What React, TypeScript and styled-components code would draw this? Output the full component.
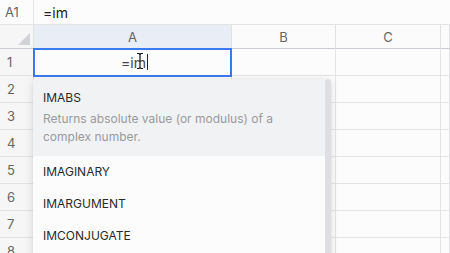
import React from 'react';
import styled, { createGlobalStyle } from 'styled-components';

const GlobalStyle = createGlobalStyle`
  html, body {
    margin: 0;
    padding: 0;
    background: #fbfbfb;
  }
  body {
    font-family: Inter, "Noto Sans", sans-serif;
  }
`;

const Sheet = styled.div`
  position: relative;
  width: 450px;
  height: 253px;
  overflow: hidden;
  background: #fbfbfb;
`;

const FormulaBar = styled.div`
  display: flex;
  height: 25px;
  box-sizing: border-box;
  border-bottom: 1px solid #e4e4e6;
  background: #fcfcfc;
`;

const NameBox = styled.div`
  width: 34px;
  box-sizing: border-box;
  border-right: 1px solid #e4e4e6;
  display: flex;
  align-items: center;
  padding-left: 5px;
  font-size: 13px;
  color: #666;
`;

const FormulaInput = styled.div`
  flex: 1;
  display: flex;
  align-items: center;
  padding-left: 9px;
  font-size: 14px;
  color: #222;
`;

const Grid = styled.div`
  display: grid;
  grid-template-columns: 34px 198px 104px 105px 1fr;
  grid-template-rows: 24px repeat(8, 27px);
`;

const Corner = styled.div`
  position: relative;
  box-sizing: border-box;
  background: #f6f6f7;
  border-right: 1px solid #e2e2e4;
  border-bottom: 1px solid #c9ccd6;
  &::after {
    content: '';
    position: absolute;
    right: 3px;
    bottom: 3px;
    border-style: solid;
    border-width: 0 0 12px 12px;
    border-color: transparent transparent #d2d3d6 transparent;
  }
`;

const ColHeader = styled.div<{ $active?: boolean }>`
  box-sizing: border-box;
  display: flex;
  align-items: center;
  justify-content: center;
  font-size: 13px;
  color: #666;
  background: ${p => (p.$active ? '#e9edf6' : '#fbfbfb')};
  border-right: 1px solid #e2e2e4;
  border-bottom: 1px solid ${p => (p.$active ? '#b9c3dc' : '#c9ccd6')};
`;

const RowHeader = styled.div`
  box-sizing: border-box;
  display: flex;
  align-items: center;
  padding-left: 7px;
  font-size: 13px;
  color: #666;
  background: #f6f6f7;
  border-right: 1px solid #e2e2e4;
  border-bottom: 1px solid #e2e2e4;
`;

const Cell = styled.div`
  box-sizing: border-box;
  background: #fcfcfc;
  border-right: 1px solid #e4e4e6;
  border-bottom: 1px solid #e4e4e6;
`;

const ActiveCell = styled(Cell)`
  position: relative;
  display: flex;
  align-items: center;
  justify-content: center;
  font-size: 14px;
  color: #444;
  &::before {
    content: '';
    position: absolute;
    left: -1px;
    top: -1px;
    right: -1px;
    bottom: -2px;
    border: 2px solid #3b79f1;
    pointer-events: none;
  }
`;

const EditText = styled.span`
  position: relative;
  display: inline-flex;
  align-items: center;
  margin-left: 4px;
`;

const Caret = styled.span`
  display: inline-block;
  width: 1px;
  height: 16px;
  background: #222;
  margin-left: 1px;
`;

const IBeam = styled.svg`
  position: absolute;
  left: 15px;
  top: -2px;
`;

const Dropdown = styled.div`
  position: absolute;
  left: 33px;
  top: 79px;
  width: 298px;
  height: 190px;
  background: #fcfcfc;
  border-radius: 3px 3px 0 0;
  box-shadow: 0 2px 10px rgba(0, 0, 0, 0.12), 0 0 2px rgba(0, 0, 0, 0.08);
  overflow: hidden;
`;

const List = styled.div`
  margin-right: 6px;
`;

const Scrollbar = styled.div`
  position: absolute;
  right: 0;
  top: 0;
  bottom: 0;
  width: 6px;
  background: #dedfe2;
  border-radius: 3px 3px 0 0;
`;

const Item = styled.div<{ $active?: boolean }>`
  box-sizing: border-box;
  padding: ${p => (p.$active ? '9px 10px 10px' : '0 10px')};
  height: ${p => (p.$active ? '77px' : '32px')};
  display: flex;
  flex-direction: column;
  justify-content: center;
  background: ${p => (p.$active ? '#f1f2f4' : 'transparent')};
`;

const ItemName = styled.div`
  font-size: 12px;
  line-height: 18px;
  color: #2a2a2a;
`;

const ItemDesc = styled.div`
  margin-top: 3px;
  font-size: 12px;
  line-height: 18px;
  color: #9a9a9c;
`;

const rows = [1, 2, 3, 4, 5, 6, 7, 8];

export default function App() {
  return (
    <>
      <GlobalStyle />
      <Sheet>
        <FormulaBar>
          <NameBox>A1</NameBox>
          <FormulaInput>=im</FormulaInput>
        </FormulaBar>
        <Grid>
          <Corner />
          <ColHeader $active>A</ColHeader>
          <ColHeader>B</ColHeader>
          <ColHeader>C</ColHeader>
          <ColHeader />
          {rows.map(r => (
            <React.Fragment key={r}>
              <RowHeader>{r}</RowHeader>
              {r === 1 ? (
                <ActiveCell>
                  <EditText>
                    =im
                    <Caret />
                    <IBeam width="8" height="18" viewBox="0 0 8 18">
                      <path
                        d="M1 1.5h2l1 1 1-1h2M4 2.5v13M1 16.5h2l1-1 1 1h2M2.5 9h3"
                        fill="none"
                        stroke="#fff"
                        strokeWidth="2.6"
                      />
                      <path
                        d="M1 1.5h2l1 1 1-1h2M4 2.5v13M1 16.5h2l1-1 1 1h2M2.5 9h3"
                        fill="none"
                        stroke="#111"
                        strokeWidth="1.2"
                      />
                    </IBeam>
                  </EditText>
                </ActiveCell>
              ) : (
                <Cell />
              )}
              <Cell />
              <Cell />
              <Cell />
            </React.Fragment>
          ))}
        </Grid>
        <Dropdown>
          <List>
            <Item $active>
              <ItemName>IMABS</ItemName>
              <ItemDesc>
                Returns absolute value (or modulus) of a complex number.
              </ItemDesc>
            </Item>
            <Item>
              <ItemName>IMAGINARY</ItemName>
            </Item>
            <Item>
              <ItemName>IMARGUMENT</ItemName>
            </Item>
            <Item>
              <ItemName>IMCONJUGATE</ItemName>
            </Item>
          </List>
          <Scrollbar />
        </Dropdown>
      </Sheet>
    </>
  );
}
